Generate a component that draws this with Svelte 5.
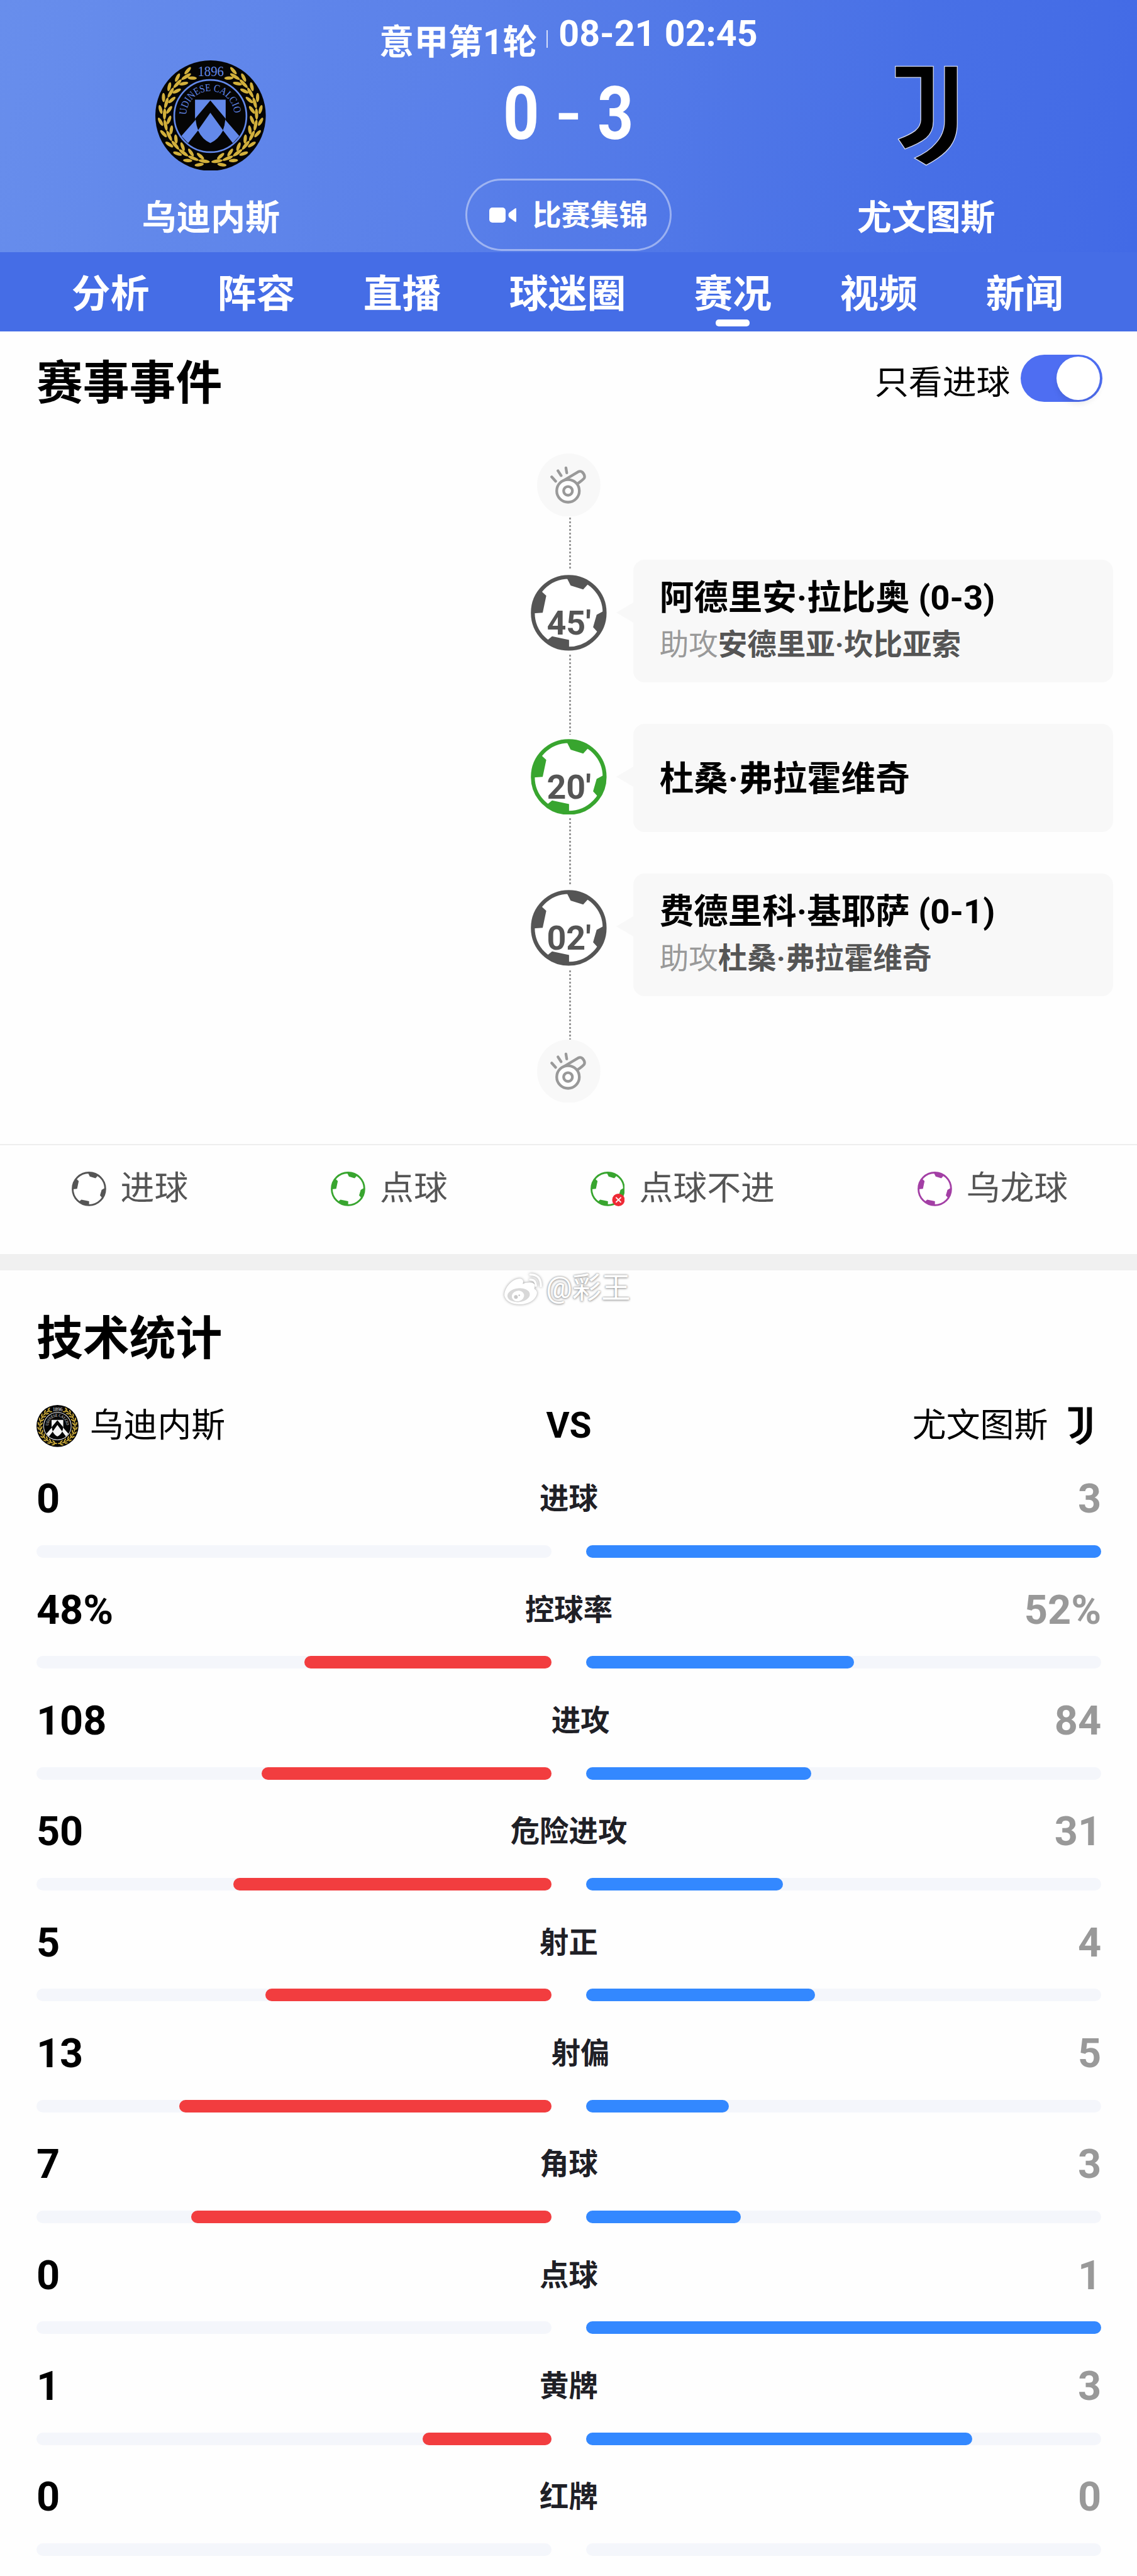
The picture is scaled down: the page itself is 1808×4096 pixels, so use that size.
<script>
  const tabs = ['分析', '阵容', '直播', '球迷圈', '赛况', '视频', '新闻'];
  let activeTab = '赛况';
  let goalsOnly = true;

  const DARK = '#555555';
  const GREEN = '#38a52f';
  const PURPLE = '#a33fa5';

  // gap = length of the connector above the event
  const events = [
    { time: "45'", color: DARK, gap: 93, player: '阿德里安·拉比奥 (0-3)', assist: '安德里亚·坎比亚索' },
    { time: "20'", color: GREEN, gap: 140, player: '杜桑·弗拉霍维奇', assist: null },
    { time: "02'", color: DARK, gap: 120, player: '费德里科·基耶萨 (0-1)', assist: '杜桑·弗拉霍维奇' }
  ];

  const legend = [
    { label: '进球', color: DARK },
    { label: '点球', color: GREEN },
    { label: '点球不进', color: GREEN, missed: true },
    { label: '乌龙球', color: PURPLE }
  ];

  const stats = [
    { label: '进球', home: 0, away: 3 },
    { label: '控球率', home: 48, away: 52, unit: '%' },
    { label: '进攻', home: 108, away: 84 },
    { label: '危险进攻', home: 50, away: 31 },
    { label: '射正', home: 5, away: 4 },
    { label: '射偏', home: 13, away: 5 },
    { label: '角球', home: 7, away: 3 },
    { label: '点球', home: 0, away: 1 },
    { label: '黄牌', home: 1, away: 3 },
    { label: '红牌', home: 0, away: 0 }
  ];

  function share(value, other) {
    const total = value + other;
    return total === 0 ? 0 : (value / total) * 100;
  }

  // Laurel leaves: three rows on each side of the crest
  const leaves = [];
  for (const side of [-1, 1]) {
    for (let i = 0; i < 11; i++) {
      const base = 8 + i * 14;
      leaves.push({ side, angle: base, r: 219, tilt: 0, len: 27 });
      leaves.push({ side, angle: base + 6, r: 199, tilt: -28, len: 22 });
      leaves.push({ side, angle: base + 5, r: 240, tilt: 22, len: 22 });
    }
  }
</script>

{#snippet crest(ink)}
  <svg class="badge" viewBox="56 49 526 526">
    <circle cx="319" cy="312" r="263" fill="#050505" />
    {#each leaves as leaf}
      <ellipse
        cx="0"
        cy="0"
        rx={leaf.len}
        ry="8"
        fill="#d2b03c"
        transform="translate(319 312) scale({leaf.side} 1) rotate({90 - leaf.angle}) translate({leaf.r} 0) rotate({-90 + leaf.tilt})"
      />
    {/each}
    <circle cx="318" cy="314" r="172" fill="#050505" stroke={ink} stroke-width="8" />
    <text x="320" y="124" class="crest-text" font-size="72" text-anchor="middle" textLength="124" lengthAdjust="spacingAndGlyphs" fill={ink}>1896</text>
    <path id="crest-arc" d="M204 309 A114 114 0 0 1 432 309" fill="none" />
    <text class="crest-text" font-size="50" fill={ink} textLength="350" lengthAdjust="spacingAndGlyphs">
      <textPath href="#crest-arc" textLength="350" lengthAdjust="spacingAndGlyphs">UDINESE CALCIO</textPath>
    </text>
    <path d="M245 236H391V330Q389 358 379 382Q355 426 318 443Q280 426 259 382Q247 358 245 330Z" fill={ink} />
    <path d="M318 240L391 327Q389 358 379 382L318 298L259 382Q247 358 245 327Z" fill="#050505" />
    <path d="M248 332L180 409L212 443L260 382Q251 360 248 332Z" fill={ink} />
    <path d="M389 332L456 409L425 443L378 382Q387 360 389 332Z" fill={ink} />
  </svg>
{/snippet}

{#snippet juve(outline)}
  <svg class="badge" viewBox="-35 20 526 526">
    <g fill="#000" stroke={outline} stroke-width="4">
      <path d="M81 48H262V310Q262 360 228 390Q195 417 127 442L95 395Q150 374 175 355Q202 333 202 303V101H81Z" />
      <path d="M315 48H376V320Q376 392 335 440Q302 480 228 519L172 485Q240 455 273 415Q315 370 315 310Z" />
    </g>
  </svg>
{/snippet}

{#snippet ball(color, missed)}
  <svg class="ball-icon" viewBox="0 0 121 121">
    <circle cx="60.5" cy="60.5" r="57.2" fill="#fff" stroke={color} stroke-width="6.2" />
    <g fill={color}>
      <path d="M58 6L63.5 17L83.5 23.3L92 14L90 8A58 58 0 0 0 58 3Z" />
      <path d="M18.7 27.7L24.7 33.3L19 60.3L4 61.5A58 58 0 0 1 16 24Z" />
      <path d="M26 104.5L34 98L61 103.7V117A58 58 0 0 1 24 106Z" />
      <path d="M118 56.5L105 63.7L99.3 83.3L108 93A58 58 0 0 0 118 56Z" />
    </g>
    {#if missed}
      <circle cx="98" cy="99" r="22" fill="#ee2a35" />
      <path d="M89 90L107 108M107 90L89 108" stroke="#fff" stroke-width="4" />
    {/if}
  </svg>
{/snippet}

{#snippet whistle()}
  <svg class="whistle" viewBox="60 22 303 303">
    <circle cx="211.5" cy="173.5" r="151.5" fill="#f8f8f8" />
    <g fill="none" stroke="#999" stroke-width="13" stroke-linecap="round" stroke-linejoin="round">
      <path d="M176 158L256 110Q268 104 276 111Q291 126 286 139Q283 145 256 165" />
      <circle cx="208" cy="201" r="54" fill="#fff" />
      <circle cx="208" cy="201" r="21" />
      <path d="M130 134L149 155M160 105L175 128M198 91L202 115" />
    </g>
  </svg>
{/snippet}

<div class="page">
  <header class="match">
    <div class="team">
      {@render crest('#6389ea')}
      <span class="team-name">乌迪内斯</span>
    </div>
    <div class="summary">
      <div class="info">
        <span class="round">意甲第1轮</span>
        <i class="sep"></i>
        <span class="date">08-21 02:45</span>
      </div>
      <div class="score">
        <span>0</span><span class="dash">-</span><span>3</span>
      </div>
      <button class="highlights">
        <svg class="camera" viewBox="0 0 44 24">
          <rect x="0" y="0" width="26" height="24" rx="5" fill="#fff" />
          <path d="M43 2V22Q43 23.5 41 22.5L32 16Q30.500 15 30.500 12T32 8L41 1.500Q43 0.500 43 2Z" fill="#fff" />
        </svg>
        <span>比赛集锦</span>
      </button>
    </div>
    <div class="team">
      {@render juve('#d5daee')}
      <span class="team-name">尤文图斯</span>
    </div>
  </header>

  <nav class="tabs">
    {#each tabs as tab}
      <button class="tab" class:active={tab === activeTab} on:click={() => (activeTab = tab)}>{tab}</button>
    {/each}
  </nav>

  <section class="events">
    <div class="events-head">
      <h2>赛事事件</h2>
      <label class="filter">
        <span class="filter-text">只看进球</span>
        <input type="checkbox" bind:checked={goalsOnly} />
        <span class="switch" class:on={goalsOnly}><span class="thumb"></span></span>
      </label>
    </div>

    <div class="timeline">
      <div class="axis">
        {@render whistle()}
        {#each events as event}
          <div class="line" style="height: {event.gap}px"></div>
          <div class="ball">
            {@render ball(event.color, false)}
            <span class="time">{event.time}</span>
          </div>
        {/each}
        <div class="line last"></div>
        {@render whistle()}
      </div>
      <div class="cards">
        {#each events as event}
          <div class="card">
            <p class="player">{event.player}</p>
            {#if event.assist}
              <p class="assist">助攻<b>{event.assist}</b></p>
            {/if}
          </div>
        {/each}
      </div>
    </div>

    <div class="rule"></div>
    <div class="legend">
      {#each legend as item}
        <div class="legend-item">
          {@render ball(item.color, item.missed)}
          <span>{item.label}</span>
        </div>
      {/each}
    </div>
    <div class="band"></div>
  </section>

  <section class="stats">
    <div class="watermark">
      <svg viewBox="30 30 210 190">
        <path d="M42 158C40 120 78 76 116 75C134 78 134 90 130 101C152 90 186 92 188 107C189 115 184 120 187 126C206 136 200 160 180 178C146 209 56 210 42 158Z" fill="#fff" />
        <ellipse cx="110" cy="155" rx="54" ry="33" fill="#d8d8d8" transform="rotate(-6 110 155)" />
        <ellipse cx="107" cy="159" rx="30" ry="25" fill="#fff" transform="rotate(-15 107 159)" />
        <circle cx="97" cy="164" r="9" fill="#c8c8c8" />
        <circle cx="113" cy="156" r="4" fill="#c8c8c8" />
        <path d="M166 56Q218 56 217 112M166 80Q194 80 193 110" fill="none" stroke="#fff" stroke-width="10" stroke-linecap="round" />
      </svg>
      <span>@彩王</span>
    </div>

    <h2>技术统计</h2>
    <div class="versus">
      <div class="side">
        {@render crest('#f4f4f4')}
        <span>乌迪内斯</span>
      </div>
      <strong>VS</strong>
      <div class="side">
        <span>尤文图斯</span>
        {@render juve('none')}
      </div>
    </div>

    {#each stats as stat}
      <div class="stat">
        <div class="stat-row">
          <span class="value">{stat.home}{stat.unit ?? ''}</span>
          <span class="stat-label">{stat.label}</span>
          <span class="value away">{stat.away}{stat.unit ?? ''}</span>
        </div>
        <div class="bars">
          <div class="track home">
            <div class="fill red" style="width: {share(stat.home, stat.away)}%"></div>
          </div>
          <div class="track">
            <div class="fill blue" style="width: {share(stat.away, stat.home)}%"></div>
          </div>
        </div>
      </div>
    {/each}
  </section>
</div>

<style>
  :global(body) {
    margin: 0;
    background: #fefefe;
  }

  .page {
    zoom: 0.998;
    width: 100%;
    height: 4104px;
    overflow: hidden;
    background: #fefefe;
    color: #000;
    font-family: Roboto, 'Noto Sans CJK SC', sans-serif;
  }

  button {
    padding: 0;
    border: none;
    background: none;
    color: inherit;
    font-family: inherit;
  }

  h2,
  p {
    margin: 0;
  }

  svg {
    display: block;
    flex: none;
  }

  .badge {
    width: 176px;
    height: 176px;
  }

  .crest-text {
    font-family: 'Liberation Serif', serif;
  }

  .match {
    display: flex;
    justify-content: space-between;
    box-sizing: border-box;
    height: 402px;
    padding: 0 136px;
    background: linear-gradient(103deg, #688eec 0%, #5a80e9 40%, #4870e6 78%, #426ae6 100%);
    color: #fff;
  }

  .team {
    display: flex;
    flex-direction: column;
    align-items: center;
    width: 400px;
    padding-top: 96px;
  }

  .team-name {
    margin-top: 36px;
    font-size: 55px;
    font-weight: 700;
    line-height: 80px;
  }

  .summary {
    display: flex;
    flex-direction: column;
    align-items: center;
  }

  .info {
    display: flex;
    align-items: flex-start;
    height: 128px;
    font-weight: 700;
    white-space: nowrap;
  }

  .round {
    margin-top: 28px;
    font-size: 55px;
    line-height: 80px;
  }

  .sep {
    width: 2px;
    height: 28px;
    margin: 48px 17px 0 15px;
    background: rgba(255, 255, 255, 0.75);
  }

  .date {
    margin-top: 14px;
    font-size: 57.500px;
    line-height: 80px;
  }

  .score {
    display: flex;
    align-items: center;
    justify-content: space-between;
    width: 218px;
    height: 104px;
    padding-top: 2px;
    margin-bottom: 51px;
    font-size: 118px;
    font-weight: 700;
    line-height: 104px;
  }

  .score span {
    transform: scaleX(0.85);
  }

  .score .dash {
    font-size: 92px;
    transform: scaleX(1.2);
  }

  .highlights {
    display: flex;
    align-items: center;
    justify-content: center;
    width: 328px;
    height: 115px;
    border-radius: 58px;
    box-shadow: inset 0 0 0 3px rgba(255, 255, 255, 0.42);
    font-size: 46px;
    font-weight: 700;
    line-height: 60px;
  }

  .highlights span {
    padding-top: 3px;
  }

  .camera {
    width: 44px;
    height: 24px;
    margin-right: 25px;
  }

  .tabs {
    display: flex;
    justify-content: space-between;
    height: 126px;
    padding: 0 117px 0 114px;
    background: #456de6;
    color: #fff;
  }

  .tab {
    position: relative;
    height: 126px;
    padding-top: 10px;
    font-size: 62px;
    font-weight: 700;
    line-height: 116px;
  }

  .tab.active::after {
    content: '';
    position: absolute;
    left: 50%;
    bottom: 8px;
    width: 54px;
    height: 11px;
    margin-left: -27px;
    border-radius: 5px;
    background: #fff;
  }

  h2 {
    font-size: 74px;
    font-weight: 700;
    line-height: 90px;
  }

  .events-head {
    display: flex;
    justify-content: space-between;
    align-items: flex-start;
    height: 156px;
    padding: 38px 55px 0 58px;
  }

  .filter {
    display: flex;
    align-items: flex-start;
    font-size: 54px;
    line-height: 80px;
  }

  .filter-text {
    padding-top: 4px;
  }

  .filter input {
    display: none;
  }

  .switch {
    box-sizing: border-box;
    width: 130px;
    height: 75px;
    margin: -1px 0 0 17px;
    padding: 3px;
    border-radius: 38px;
    background: #ddd;
  }

  .switch.on {
    padding-left: 57px;
    background: #4e6ef2;
  }

  .thumb {
    display: block;
    width: 69px;
    height: 69px;
    border-radius: 50%;
    background: #fff;
    box-shadow: 0 6px 10px rgba(0, 0, 0, 0.08);
  }

  .timeline {
    display: flex;
    height: 1101px;
    padding: 0 38px 0 846px;
  }

  .axis {
    display: flex;
    flex-direction: column;
    align-items: center;
    width: 121px;
  }

  .whistle {
    width: 101px;
    height: 101px;
  }

  .line {
    box-sizing: border-box;
    width: 3px;
    margin-left: 4px;
    padding: 6px 0 7px;
    background: repeating-linear-gradient(#999 0 3px, transparent 3px 6px) content-box;
  }

  .line:first-of-type {
    padding: 2px 0 9px;
  }

  .line.last {
    height: 117px;
    padding: 7px 0 0;
  }

  .ball {
    position: relative;
    width: 121px;
    height: 121px;
  }

  .ball .ball-icon {
    width: 121px;
    height: 121px;
  }

  .time {
    position: absolute;
    top: 47px;
    left: 0;
    width: 121px;
    text-align: center;
    color: #555;
    font-size: 54px;
    font-weight: 700;
    line-height: 60px;
  }

  .cards {
    display: flex;
    flex: 1;
    flex-direction: column;
    gap: 66px;
    margin-left: 42px;
    padding-top: 170px;
  }

  .card {
    position: relative;
    display: flex;
    flex-direction: column;
    justify-content: center;
    box-sizing: border-box;
    min-height: 173px;
    padding: 24px 42px 21px;
    border-radius: 18px;
    background: #f8f8f8;
    white-space: nowrap;
  }

  .card::before {
    content: '';
    position: absolute;
    top: 68px;
    left: -27px;
    border: solid transparent;
    border-width: 17px 28px 17px 0;
    border-right-color: #f8f8f8;
  }

  .player {
    font-size: 54.600px;
    font-weight: 700;
    line-height: 74px;
  }

  .assist {
    color: #999;
    font-size: 46.600px;
    font-weight: 400;
    line-height: 76px;
  }

  .assist b {
    color: #555;
    font-weight: 700;
  }

  .rule {
    height: 2px;
    background: #eee;
  }

  .legend {
    display: flex;
    justify-content: space-between;
    height: 173px;
    padding: 0 110px 0 114px;
    color: #555;
    font-size: 54px;
    line-height: 80px;
  }

  .legend-item {
    display: flex;
    align-items: center;
    gap: 23px;
    height: 138px;
  }

  .legend-item .ball-icon {
    width: 55px;
    height: 55px;
  }

  .band {
    height: 26px;
    background: #f0f0f0;
  }

  .stats {
    position: relative;
    padding: 64px 57px 0 58px;
  }

  .watermark {
    position: absolute;
    top: -2px;
    left: 800px;
    display: flex;
    align-items: center;
    color: #fff;
    font-size: 46.500px;
    line-height: 60px;
    text-shadow: 0 0 3px #888, 0 1px 4px #aaa;
  }

  .watermark svg {
    width: 70px;
    height: 63px;
    filter: drop-shadow(0 0 2px #999);
  }

  .versus {
    display: flex;
    align-items: center;
    justify-content: space-between;
    height: 80px;
    margin: 54px 0 37px;
    font-size: 54px;
    line-height: 80px;
  }

  .versus strong {
    font-size: 57px;
    font-weight: 700;
  }

  .side {
    display: flex;
    align-items: center;
    gap: 18px;
  }

  .side .badge {
    width: 67px;
    height: 67px;
  }

  .stat {
    height: 176.700px;
  }

  .stat-row {
    display: flex;
    align-items: center;
    justify-content: space-between;
    height: 80px;
  }

  .value {
    font-size: 65px;
    font-weight: 700;
    line-height: 80px;
  }

  .value.away {
    color: #999;
  }

  .stat-label {
    color: #1f2026;
    font-size: 46.500px;
    font-weight: 700;
    line-height: 80px;
  }

  .bars {
    display: flex;
    gap: 55px;
    margin-top: 33px;
  }

  .track {
    display: flex;
    flex: 1;
    height: 20px;
    border-radius: 10px;
    background: #f4f6fb;
  }

  .track.home {
    justify-content: flex-end;
  }

  .fill {
    border-radius: 10px;
  }

  .red {
    background: #f23d3f;
  }

  .blue {
    background: #3388ff;
  }
</style>
